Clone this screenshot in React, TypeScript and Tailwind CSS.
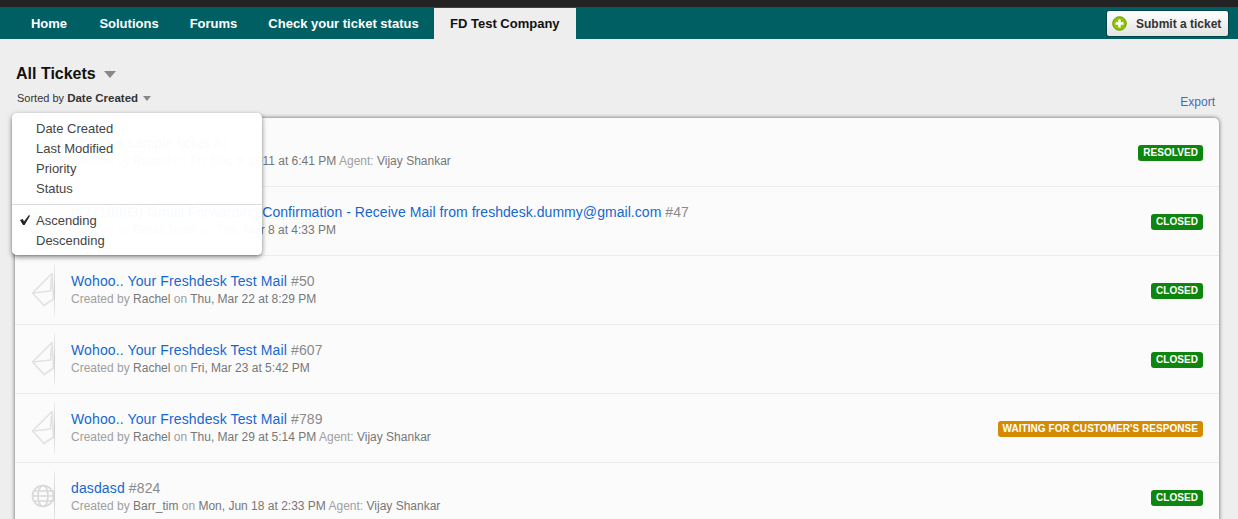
interface Ticket {
  title: string;
  titleClass: string;
  id: number;
  by: string;
  date: string;
  agent?: string;
  status: string;
  icon: 'mail' | 'globe';
}

const tickets: Ticket[] = [
  { title: 'This is a sample ticket', titleClass: 'tracking-[0.05px]', id: 1, by: 'Rachel', date: 'Fri, Dec 9, 2011 at 6:41 PM', agent: 'Vijay Shankar', status: 'RESOLVED', icon: 'mail' },
  { title: '(#7710963) Gmail Forwarding Confirmation - Receive Mail from freshdesk.dummy@gmail.com', titleClass: 'tracking-[0.05px]', id: 47, by: 'Gmail Team', date: 'Thu, Mar 8 at 4:33 PM', status: 'CLOSED', icon: 'mail' },
  { title: 'Wohoo.. Your Freshdesk Test Mail', titleClass: 'tracking-[0.125px]', id: 50, by: 'Rachel', date: 'Thu, Mar 22 at 8:29 PM', status: 'CLOSED', icon: 'mail' },
  { title: 'Wohoo.. Your Freshdesk Test Mail', titleClass: 'tracking-[0.125px]', id: 607, by: 'Rachel', date: 'Fri, Mar 23 at 5:42 PM', status: 'CLOSED', icon: 'mail' },
  { title: 'Wohoo.. Your Freshdesk Test Mail', titleClass: 'tracking-[0.125px]', id: 789, by: 'Rachel', date: 'Thu, Mar 29 at 5:14 PM', agent: 'Vijay Shankar', status: "WAITING FOR CUSTOMER'S RESPONSE", icon: 'mail' },
  { title: 'dasdasd', titleClass: 'tracking-[0.125px]', id: 824, by: 'Barr_tim', date: 'Mon, Jun 18 at 2:33 PM', agent: 'Vijay Shankar', status: 'CLOSED', icon: 'globe' },
];

const navItems = [
  { label: 'Home', width: 'w-[70px]' },
  { label: 'Solutions', width: 'w-[90px]' },
  { label: 'Forums', width: 'w-[79px]' },
  { label: 'Check your ticket status', width: 'w-[181px]' },
];

function MailIcon() {
  return (
    <svg width="23" height="36" viewBox="0 0 23 36" fill="none" stroke="#e2e2e2" strokeWidth="1.7" strokeLinejoin="round">
      <path d="M1.5 21 L21 1.5 L22.5 27 L13 33.5 Z" />
      <path d="M2 21 L19.5 19 L20.5 6" />
    </svg>
  );
}

function GlobeIcon() {
  return (
    <svg width="23" height="24" viewBox="0 0 23 24" fill="none" stroke="#d9d9d9" strokeWidth="1.7" className="mb-[3px]">
      <circle cx="12" cy="12" r="10.5" />
      <ellipse cx="12" cy="12" rx="5" ry="10.5" />
      <path d="M1.5 12 H23 M3.5 7 H23 M3.5 17 H23" />
    </svg>
  );
}

function TicketRow({ ticket }: { ticket: Ticket }) {
  const color = ticket.status.startsWith('WAITING') ? 'bg-[#d48b00]' : 'bg-[#0e850e]';
  return (
    <div className="flex h-[69px] items-center border-b border-[#ececec] pr-4">
      <div className="mt-2 flex h-[52px] w-[40px] items-center justify-end self-start">
        {ticket.icon === 'mail' ? <MailIcon /> : <GlobeIcon />}
        <span className="h-full w-px shrink-0 bg-gradient-to-b from-[#eeeeee] via-[#cccccc] to-[#eeeeee]" />
      </div>
      <div className="ml-4 mt-4 flex-1 self-start">
        <div className={`text-[14px] leading-[18px] ${ticket.titleClass}`}>
          <span className="text-[#1668cf]">{ticket.title}</span>
          <span className="text-[#8a8a8a]"> #{ticket.id}</span>
        </div>
        <div className="text-[12px] leading-[18px] text-[#a0a0a0]">
          Created by <span className="text-[#777777]">{ticket.by}</span> on{' '}
          <span className="text-[#777777]">{ticket.date}</span>
          {ticket.agent && (
            <>
              {' '}Agent: <span className="text-[#777777]">{ticket.agent}</span>
            </>
          )}
        </div>
      </div>
      <span className={`${color} mt-[2px] rounded-[3px] px-[5px] text-[10px] font-bold leading-[16px] tracking-[0.05px] text-white`}>
        {ticket.status}
      </span>
    </div>
  );
}

function SortMenu() {
  return (
    <div className="absolute left-[12px] top-[113px] z-10 h-[142px] w-[250px] rounded-[5px] bg-white/[0.97] pb-[5px] pt-[6px] text-[13px] text-[#444444] shadow-[0_2px_5px_rgba(0,0,0,0.5)]">
      {['Date Created', 'Last Modified', 'Priority', 'Status'].map(label => (
        <div key={label} className="pl-6 leading-[20px]">{label}</div>
      ))}
      <div className="mb-[6px] mt-[5px] border-t border-[#dcdcdc]" />
      <div className="relative pl-6 leading-[20px]">
        <svg width="10" height="10" viewBox="0 0 10 10" className="absolute left-[8px] top-[4px]" fill="#222222">
          <path d="M0 5 L2.8 4 L4 6.6 L9 0 L10 0.8 L4.6 10 L3 10 Z" />
        </svg>
        Ascending
      </div>
      <div className="pl-6 leading-[20px]">Descending</div>
    </div>
  );
}

export default function App() {
  return (
    <div className="relative h-[519px] overflow-hidden bg-[#eeeeee] font-['Liberation_Sans',Arial,sans-serif]">
      <div className="h-[7px] bg-[#232323]" />
      <div className="flex h-[32px] items-end justify-between bg-[#005f63] pl-[14px] pr-[9px]">
        <nav className="flex h-[31px] text-[13px] font-bold text-white">
          {navItems.map(item => (
            <a key={item.label} className={`flex items-center justify-center ${item.width}`}>{item.label}</a>
          ))}
          <a className="flex items-center bg-[#eeeeee] px-4 text-[#111111]">FD Test Company</a>
        </nav>
        <button className="mb-[2px] flex h-[27px] w-[123px] items-center rounded-[3px] border border-[#00474a] bg-gradient-to-b from-white to-[#e3e3e3] pl-[5px] text-[12px] font-bold text-[#333333]">
          <svg width="15" height="15" viewBox="0 0 15 15" className="mr-[9px]">
            <circle cx="7.5" cy="7.5" r="6.8" fill="#8cc400" stroke="#6a9c00" />
            <path d="M7.5 3.5 V11.5 M3.5 7.5 H11.5" stroke="#ffffff" strokeWidth="2.4" />
          </svg>
          Submit a ticket
        </button>
      </div>

      <main className="pl-[15px] pr-[19px]">
        <div className="flex h-[79px] flex-col pl-px">
          <div className="mt-[26px] flex items-center text-[16px] font-bold leading-[18px] text-[#111111]">
            All Tickets
            <span className="ml-2 border-x-[6px] border-t-[7px] border-x-transparent border-t-[#888888]" />
          </div>
          <div className="mt-[2px] flex items-center justify-between pr-[4px]">
            <div className="flex items-center pl-px text-[11px] leading-[14px] text-[#333333]">
              Sorted by&nbsp;<span className="text-[11.5px] font-bold">Date Created</span>
              <span className="ml-[5px] border-x-[4px] border-t-[5px] border-x-transparent border-t-[#888888]" />
            </div>
            <a className="mt-2 text-[12px] text-[#3d6eb4]">Export</a>
          </div>
        </div>

        <div className="rounded-[5px] bg-[#fbfbfb] shadow-[0_0_4px_rgba(0,0,0,0.6)]">
          {tickets.map(ticket => (
            <TicketRow key={ticket.id} ticket={ticket} />
          ))}
        </div>
      </main>

      <SortMenu />
    </div>
  );
}
